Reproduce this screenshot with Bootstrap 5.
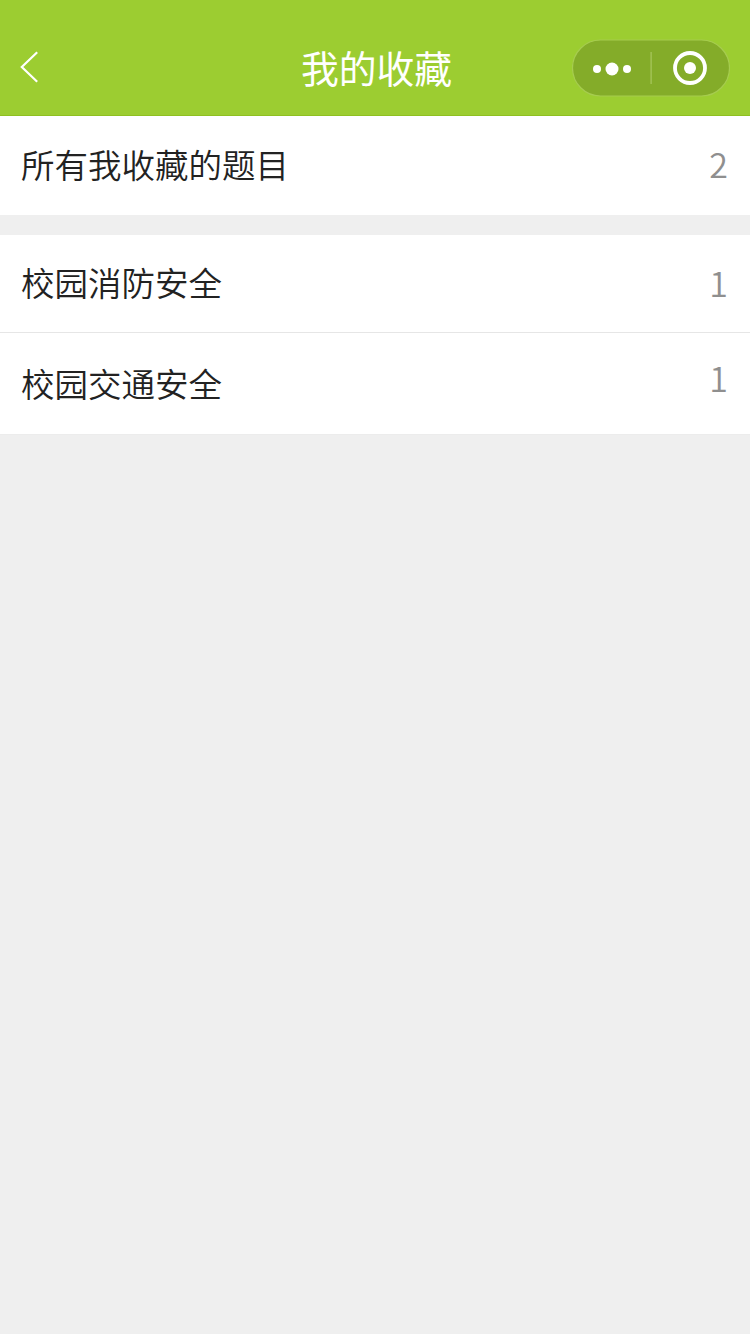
<!DOCTYPE html>
<html lang="zh-CN">
<head>
<meta charset="utf-8">
<title>我的收藏</title>
<link href="https://cdn.jsdelivr.net/npm/bootstrap@5.3.0/dist/css/bootstrap.min.css" rel="stylesheet">
<style>
html, body { height: 100%; }
body { background: #efefef; font-family: "Noto Sans CJK SC", "Noto Sans", sans-serif; }
.top-bar { height: 116px; background: #9ccd31; border-bottom: 1px solid #8fc021; color: #fff; }
.top-back { left: 19px; top: 50px; width: 22px; height: 34px; display: block; }
.top-title { font-size: 37.8px; line-height: 50px; font-weight: 400; margin-top: 42px; padding-left: 3px; }
.capsule { right: 20px; top: 39px; width: 158px; height: 58px; display: block; }
.fav-row { background: #fff; color: #222; }
.fav-name { font-size: 33.5px; font-weight: 350; line-height: 44px; padding-left: 21px; }
.fav-count { font-size: 34px; font-weight: 350; line-height: 44px; color: #8f8f8f; padding-right: 22px; }
.row-all { height: 99px; padding-top: 26px; }
.row-a { height: 98px; padding-top: 25px; margin-top: 20px; }
.row-b { height: 102px; padding-top: 28px; }
.row-all .fav-count { margin-top: 0; }
.row-a .fav-count { margin-top: 1px; }
.row-b .fav-count { margin-top: -5px; }
.line-bottom { border-bottom: 1px solid #e6e6e6; }
.row-b.line-bottom { border-bottom-color: #ececec; }
</style>
</head>
<body>
<header class="top-bar position-relative d-flex justify-content-center">
  <svg class="top-back position-absolute" viewBox="0 0 22 34" fill="none" stroke="#fff" stroke-width="2.2"><path d="M18.2 2.2 2.8 17l15.4 14.8"/></svg>
  <div class="top-title">我的收藏</div>
  <svg class="capsule position-absolute" viewBox="0 0 158 58">
    <rect x="0.5" y="1" width="157" height="56" rx="28" fill="#84ac29" stroke="#a6cc4f" stroke-width="1.2"/>
    <circle cx="25" cy="30" r="4" fill="#fff"/><circle cx="40" cy="30" r="6.5" fill="#fff"/><circle cx="55" cy="30" r="4" fill="#fff"/>
    <rect x="78.5" y="13" width="1.2" height="32" fill="#a9c85f"/>
    <circle cx="118" cy="29" r="15" fill="none" stroke="#fff" stroke-width="3.8"/><circle cx="118" cy="29" r="6" fill="#fff"/>
  </svg>
</header>
<main>
  <div class="fav-row row-all d-flex justify-content-between">
    <div class="fav-name">所有我收藏的题目</div><div class="fav-count">2</div>
  </div>
  <div class="fav-row row-a line-bottom d-flex justify-content-between">
    <div class="fav-name">校园消防安全</div><div class="fav-count">1</div>
  </div>
  <div class="fav-row row-b line-bottom d-flex justify-content-between">
    <div class="fav-name">校园交通安全</div><div class="fav-count">1</div>
  </div>
</main>
<script src="https://cdn.jsdelivr.net/npm/bootstrap@5.3.0/dist/js/bootstrap.bundle.min.js"></script>
</body>
</html>
